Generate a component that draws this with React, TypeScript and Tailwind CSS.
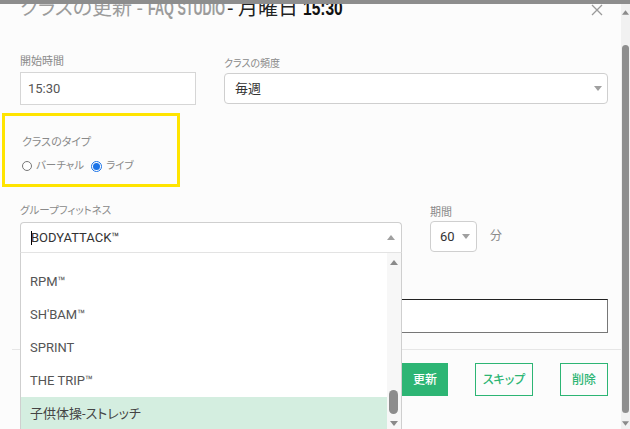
import React from "react";

const items = ["RPM™", "SH'BAM™", "SPRINT", "THE TRIP™"];

function Caret({ up = false, className = "" }: { up?: boolean; className?: string }) {
  return (
    <svg width="8" height="5" viewBox="0 0 8 5" className={className}>
      {up ? <path d="M0 5 L4 0 L8 5 Z" fill="currentColor" /> : <path d="M0 0 L8 0 L4 5 Z" fill="currentColor" />}
    </svg>
  );
}

export default function App() {
  return (
    <div className="relative flex h-[429px] w-[630px] overflow-hidden bg-[#fcfcfc] font-['Roboto','Noto_Sans_CJK_JP',sans-serif] [font-feature-settings:'palt']">
      {/* overlay strip above the dialog */}
      <div className="absolute left-0 right-0 top-0 z-20 h-[4px] bg-[#8d8d8d]" />

      <div className="relative flex-1 pl-[20px] pr-[13px]">
        {/* title */}
        <div className="-mt-[5px] flex h-[26px] items-center whitespace-nowrap text-[20px] leading-[26px]">
          <span className="text-[#9c9c9c]">クラスの更新 -&nbsp;</span>
          <span className="inline-block w-[80px]">
            <span className="inline-block origin-left scale-x-[0.6] font-['Liberation_Sans',sans-serif] text-[21px] font-bold text-[#9c9c9c]">
              FAQ STUDIO
            </span>
          </span>
          <span className="text-[#222]">- 月曜日&nbsp;</span>
          <span className="inline-block w-[42px]">
            <span className="inline-block origin-left scale-x-[0.74] font-['Liberation_Sans',sans-serif] text-[21px] font-bold text-[#111]">
              15:30
            </span>
          </span>
        </div>

        <svg className="absolute right-[18px] top-[4px]" width="12" height="12" viewBox="0 0 12 12">
          <path d="M1 1 L11 11 M11 1 L1 11" stroke="#9a9a9a" strokeWidth="1.3" />
        </svg>

        {/* start time / frequency */}
        <div className="mt-[34px] flex items-start gap-[28px]">
          <div className="w-[176px]">
            <div className="text-[11px] leading-[14px] text-[#8a8a8a]">開始時間</div>
            <div className="mt-[3px] flex h-[33px] items-center border border-[#d6d6d6] bg-white px-[7px] text-[13px] text-[#555]">
              15:30
            </div>
          </div>
          <div className="flex-1">
            <div className="pt-[2px] text-[10px] leading-[14px] text-[#8a8a8a]">クラスの頻度</div>
            <div className="mt-[2px] flex h-[31px] items-center justify-between rounded-[4px] border border-[#cfcfcf] bg-white pl-[10px] pr-[5px] text-[13px] text-[#333]">
              <span>毎週</span>
              <Caret className="text-[#a0a0a0]" />
            </div>
          </div>
        </div>

        {/* class type */}
        <div className="-ml-[18px] mt-[8px] h-[74px] w-[178px] border-[3px] border-[#ffe400] pl-[17px] pt-[20px]">
          <div className="text-[11px] leading-[14px] text-[#8a8a8a]">クラスのタイプ</div>
          <div className="mt-[9px] flex items-center text-[10.5px] leading-[14px] text-[#888]">
            <span className="h-[10px] w-[10px] rounded-full border border-[#777] bg-white" />
            <span className="ml-[4px]">バーチャル</span>
            <span className="ml-[7px] flex h-[11px] w-[11px] items-center justify-center rounded-full border border-[#1a73e8] bg-white">
              <span className="h-[7px] w-[7px] rounded-full bg-[#1a73e8]" />
            </span>
            <span className="ml-[4px]">ライブ</span>
          </div>
        </div>

        {/* group fitness / duration */}
        <div className="mt-[17px] flex items-start gap-[28px]">
          <div className="w-[382px]">
            <div className="text-[10.5px] leading-[14px] text-[#8a8a8a]">グループフィットネス</div>
            <div className="mt-[4px] flex h-[30px] items-center justify-between rounded-t-[4px] border border-b-0 border-[#cfcfcf] bg-white pl-[10px] pr-[6px] text-[13px] text-[#333]">
              <span className="flex items-center">
                <span className="-mr-px h-[14px] w-px bg-black" />
                BODYATTACK™
              </span>
              <Caret up className="text-[#a0a0a0]" />
            </div>
          </div>
          <div>
            <div className="pt-[2px] text-[11px] leading-[14px] text-[#8a8a8a]">期間</div>
            <div className="flex items-center">
              <div className="mt-[1px] flex h-[31px] w-[47px] items-center justify-between rounded-[4px] border border-[#cfcfcf] bg-white pl-[9px] pr-[6px] text-[13px] text-[#333]">
                <span>60</span>
                <Caret className="text-[#a0a0a0]" />
              </div>
              <span className="ml-[13px] text-[12px] text-[#8a8a8a]">分</span>
            </div>
          </div>
        </div>

        {/* notes */}
        <div className="mt-[47px] h-[34px] border border-[#777] border-t-[#222] bg-white" />

        <div className="-ml-[8px] -mr-[13px] mt-[16px] h-px bg-[#e6e6e6]" />

        {/* actions */}
        <div className="mt-[13px] flex justify-end gap-[27px] text-[12px] font-medium">
          <button className="h-[33px] w-[46px] bg-[#2db574] text-white">更新</button>
          <button className="h-[33px] w-[58px] border-[1.5px] border-[#2db574] text-[#2db574]">スキップ</button>
          <button className="h-[33px] w-[48px] border-[1.5px] border-[#2db574] text-[#2db574]">削除</button>
        </div>

        {/* open list of the group fitness select */}
        <div className="absolute left-[20px] top-[252px] z-10 flex h-[190px] w-[382px] border-x border-t border-x-[#cfcfcf] border-t-[#e3e3e3] bg-white">
          <div className="flex-1 pt-[12px]">
            {items.map((t) => (
              <div key={t} className="flex h-[33px] items-center pl-[9px] text-[13px] text-[#555]">
                {t}
              </div>
            ))}
            <div className="flex h-[33px] items-center bg-[#d4eee0] pl-[9px] text-[13px] text-[#444]">子供体操-ストレッチ</div>
          </div>
          <div className="relative w-[14px] bg-[#f7f7f7]">
            <Caret up className="absolute left-[3px] top-[7px] text-[#8a8a8a]" />
            <div className="absolute left-[2px] top-[137px] h-[24px] w-[9px] rounded-full bg-[#8c8c8c]" />
            <Caret className="absolute left-[3px] top-[168px] text-[#8a8a8a]" />
          </div>
        </div>
      </div>

      {/* page scrollbar */}
      <div className="relative w-[9px] bg-[#f1f1f1]">
        <Caret up className="absolute left-[1px] top-[10px] h-[5px] w-[7px] text-[#8a8a8a]" />
        <div className="absolute left-[1px] top-[45px] h-[368px] w-[7px] rounded-full bg-[#8e8e8e]" />
        <Caret className="absolute left-[1px] top-[421px] h-[5px] w-[7px] text-[#8a8a8a]" />
      </div>
    </div>
  );
}
